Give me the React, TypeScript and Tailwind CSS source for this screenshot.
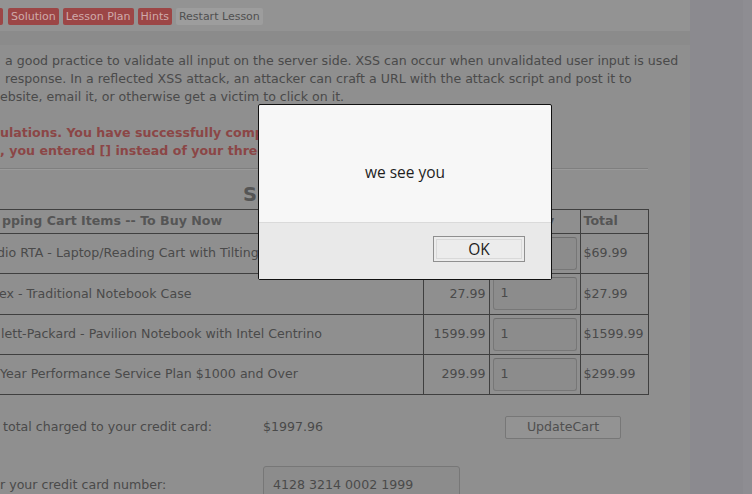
const rows = [
  { name: 'dio RTA - Laptop/Reading Cart with Tilting Surface - Cherry', price: '69.99', total: '$69.99', shift: '-ml-[5px]' },
  { name: 'ex - Traditional Notebook Case', price: '27.99', total: '$27.99', shift: '-ml-[3px]' },
  { name: 'lett-Packard - Pavilion Notebook with Intel Centrino', price: '1599.99', total: '$1599.99', shift: '-ml-[1px]' },
  { name: 'Year Performance Service Plan $1000 and Over', price: '299.99', total: '$299.99', shift: '-ml-[2px]' },
];

const App = () => {
  return (
    <div className="relative w-[752px] h-[494px] overflow-hidden bg-[#8f8f8f] flex font-['DejaVu_Sans',sans-serif] text-[12.6px] text-[#4a4a4a]">
      {/* page body (dimmed by the alert overlay) */}
      <main className="w-[690px] shrink-0 flex flex-col overflow-hidden">
        {/* lesson menu */}
        <div className="shrink-0 h-[31px] bg-[#939393] flex items-center gap-[4px] pt-[1px]">
          <span className="-ml-[5px] h-[17px] w-[8px] rounded-[2px] bg-[#9c4646]"></span>
          <button className="ml-[1px] h-[17px] px-[3px] rounded-[2px] bg-[#9c4646] text-[#cfaaaa] text-[11px] leading-[17px]">Solution</button>
          <button className="h-[17px] px-[3px] rounded-[2px] bg-[#9c4646] text-[#cfaaaa] text-[11px] leading-[17px]">Lesson Plan</button>
          <button className="h-[17px] px-[3px] rounded-[2px] bg-[#9c4646] text-[#cfaaaa] text-[11px] leading-[17px]">Hints</button>
          <button className="h-[17px] px-[3px] rounded-[2px] bg-[#9d9d9d] text-[#505050] text-[11px] leading-[17px]">Restart Lesson</button>
        </div>
        <div className="shrink-0 h-[14px] bg-[#8b8b8b]"></div>

        <section className="shrink-0 pt-[7px] whitespace-nowrap">
          <p className="leading-[18px]">
            <span className="block pl-[5px]">a good practice to validate all input on the server side. XSS can occur when unvalidated user input is used</span>
            <span className="block pl-[5px]">response. In a reflected XSS attack, an attacker can craft a URL with the attack script and post it to</span>
            <span className="block">ebsite, email it, or otherwise get a victim to click on it.</span>
          </p>

          <p className="mt-[18px] leading-[18px] font-bold text-[#8b4646]">
            <span className="block">ulations. You have successfully completed this lesson. However,</span>
            <span className="block">, you entered [] instead of your three digit code. Please try again.</span>
          </p>

          <hr className="mt-[8px] w-[648px] border-0 border-t border-t-[#7f7f7f] border-b border-b-[#9a9a9a]" />

          <h2 className="mt-[13px] pl-[243px] text-[19.5px] leading-[24px] font-bold text-[#555555]">Shopping Cart</h2>

          <table className="mt-[2px] w-[648px] table-fixed border-collapse">
            <colgroup>
              <col className="w-[423px]" />
              <col className="w-[66px]" />
              <col className="w-[91px]" />
              <col className="w-[68px]" />
            </colgroup>
            <thead>
              <tr className="h-[24px] font-bold text-left text-[#555555]">
                <th className="border border-l-0 border-[#3f3f3f] px-[2px] overflow-hidden">pping Cart Items -- To Buy Now</th>
                <th className="border border-[#3f3f3f] px-[3px]">Price</th>
                <th className="border border-[#3f3f3f] px-[3px]">Quantity</th>
                <th className="border border-[#3f3f3f] px-[3px]">Total</th>
              </tr>
            </thead>
            <tbody>
              {rows.map((r) => (
                <tr key={r.name} className="h-[40.3px]">
                  <td className="border border-l-0 border-[#3f3f3f] px-[2px] overflow-hidden">
                    <span className={`block ${r.shift}`}>{r.name}</span>
                  </td>
                  <td className="border border-[#3f3f3f] px-[3px] text-right">{r.price}</td>
                  <td className="border border-[#3f3f3f] px-[3px]">
                    <div className="h-[33px] rounded-[3px] border border-[#777777] border-t-[#6e6e6e] bg-[#8c8c8c] pl-[7px] flex items-center">1</div>
                  </td>
                  <td className="border border-[#3f3f3f] px-[3px]">{r.total}</td>
                </tr>
              ))}
            </tbody>
          </table>

          <div className="mt-[20px] flex items-center h-[24px]">
            <span className="w-[263px] pl-[3px]">total charged to your credit card:</span>
            <span className="w-[242px]">$1997.96</span>
            <button className="w-[116px] h-[23px] border border-[#777777] bg-[#939393] text-[#4f4f4f] rounded-[2px]">UpdateCart</button>
          </div>

          <div className="mt-[27px] flex items-start">
            <span className="w-[263px] pt-[10px]">r your credit card number:</span>
            <div className="w-[197px] h-[34px] rounded-[3px] border border-[#777777] bg-[#8c8c8c] pl-[9px] pt-[9px]">4128 3214 0002 1999</div>
          </div>
        </section>
      </main>

      {/* right gutter */}
      <div className="flex-1 bg-[#8b8a8f] flex justify-end">
        <div className="w-[9px] bg-[#8e8d92]"></div>
      </div>

      {/* alert dialog */}
      <div className="absolute left-[258px] top-[104px] w-[294px] h-[176px] rounded-[2px] border border-[#111111] bg-[#f7f7f7] flex flex-col font-['Open_Sans',sans-serif] text-[#1e1e1e]">
        <div className="flex-1 flex items-center justify-center pt-[18px] text-[15.5px]">we see you</div>
        <div className="h-[57px] bg-[#e9e9e9] border-t border-[#dadada] flex items-start justify-end pr-[26px] pt-[13px]">
          <button className="w-[92px] h-[26px] border border-[#8f8f8f] bg-[#ececec] p-[2px] text-[15.5px]">
            <span className="block h-full border border-[#d9d9d9] leading-[18px]">OK</span>
          </button>
        </div>
      </div>
    </div>
  );
};

export default App;
